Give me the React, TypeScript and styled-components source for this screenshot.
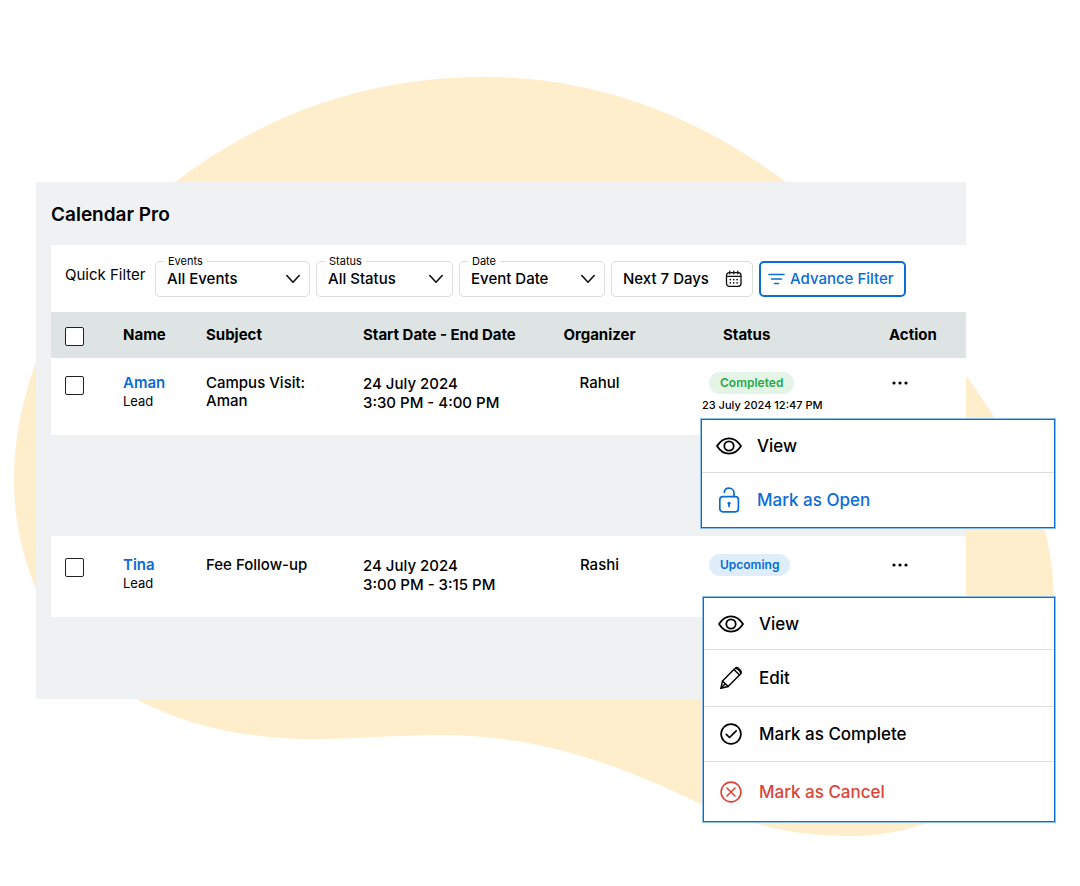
import React from "react";
import styled, { createGlobalStyle } from "styled-components";

const BLUE = "#0a6cd8";
const RED = "#dc4436";

const GlobalStyle = createGlobalStyle`
  *, *::before, *::after { box-sizing: border-box; }
  body {
    margin: 0;
    background: #fff;
    color: #000;
    font-family: Inter, "Liberation Sans", sans-serif;
    font-size: 15px;
    font-weight: 500;
    line-height: 18px;
  }
  button, select { font: inherit; color: inherit; }
`;

const Page = styled.div`
  position: relative;
  min-height: 100vh;
  padding: 182px 114px 64px 36px;
  overflow: hidden;
`;

const Backdrop = styled.svg`
  position: absolute;
  top: 0;
  left: 0;
  width: 100%;
  height: auto;
`;

const Panel = styled.main`
  position: relative;
  padding: 0 0 82px 15px;
  background: #f0f1f3;
`;

const Title = styled.h1`
  margin: 0;
  padding: 21px 0 18px;
  font-size: 19px;
  font-weight: 600;
  line-height: 24px;
`;

const FilterBar = styled.form`
  display: flex;
  align-items: flex-start;
  gap: 6px;
  padding: 16px 14px 15px;
  background: #fff;
  font-weight: 400;
`;

const FilterHeading = styled.span`
  flex: none;
  width: 84px;
  padding-top: 5px;
  white-space: nowrap;
`;

const Field = styled.div<{ $width: number }>`
  position: relative;
  flex: 0 1 ${(p) => p.$width}px;
  min-width: 0;

  > svg {
    position: absolute;
    top: 13px;
    right: 9px;
    pointer-events: none;
  }
`;

const FieldLabel = styled.label`
  position: absolute;
  top: -6px;
  left: 9px;
  padding: 0 4px;
  background: #fff;
  font-size: 11px;
  line-height: 12px;
`;

const Select = styled.select`
  display: block;
  width: 100%;
  height: 36px;
  padding: 0 28px 0 11px;
  border: 1px solid #dcdcdc;
  border-radius: 5px;
  background: #fff;
  font-weight: 500;
  appearance: none;
`;

const DateButton = styled.button`
  display: flex;
  flex: 0 1 142px;
  align-items: center;
  justify-content: space-between;
  height: 36px;
  padding: 0 10px 0 11px;
  border: 1px solid #dcdcdc;
  border-radius: 5px;
  background: #fff;
  font-weight: 500;
  white-space: nowrap;
`;

const AdvanceButton = styled.button`
  display: flex;
  flex: 0 1 147px;
  align-items: center;
  gap: 5px;
  height: 36px;
  padding: 0 7px;
  border: 2px solid ${BLUE};
  border-radius: 5px;
  background: #fff;
  color: ${BLUE};
  font-weight: 500;
  white-space: nowrap;
`;

const Table = styled.table`
  width: 100%;
  table-layout: fixed;
  border-collapse: collapse;
  text-align: left;
`;

const HeadRow = styled.tr`
  height: 46px;
  background: #dee4e3;
`;

const HeadCell = styled.th<{ $inset?: number; $center?: boolean }>`
  padding: 0 0 0 ${(p) => p.$inset ?? 0}px;
  font-weight: 700;
  text-align: ${(p) => (p.$center ? "center" : "left")};
  white-space: nowrap;
`;

const BodyRow = styled.tr<{ $height: number; $top: number }>`
  height: ${(p) => p.$height}px;
  background: #fff;

  > td {
    padding-top: ${(p) => p.$top}px;
  }
`;

const SpacerRow = styled.tr`
  height: 101px;
`;

const Cell = styled.td<{ $inset?: number; $center?: boolean }>`
  position: relative;
  padding: 0 0 0 ${(p) => p.$inset ?? 0}px;
  text-align: ${(p) => (p.$center ? "center" : "left")};
  vertical-align: top;
  white-space: nowrap;
`;

const Checkbox = styled.input`
  display: block;
  width: 19px;
  height: 19px;
  margin: 2px 0 0;
  border: 1px solid #222;
  border-radius: 2px;
  background: #fff;
  appearance: none;

  &:checked {
    background: ${BLUE};
  }
`;

const NameLink = styled.a`
  display: block;
  color: ${BLUE};
  font-weight: 600;
  text-decoration: none;
`;

const Kind = styled.span`
  display: block;
  font-size: 13px;
  font-weight: 400;
`;

const Subject = styled.span`
  display: block;
  max-width: 110px;
  white-space: normal;
`;

const Times = styled.span`
  display: block;
  line-height: 19px;
`;

const Chip = styled.span<{ $tone: "green" | "blue" }>`
  display: block;
  width: fit-content;
  margin: -2px 0 0 7px;
  padding: 0 11px;
  border-radius: 11px;
  background: ${(p) => (p.$tone === "green" ? "#e4f5e8" : "#dfedfa")};
  color: ${(p) => (p.$tone === "green" ? "#2aa84a" : BLUE)};
  font-size: 12px;
  font-weight: 600;
  line-height: 22px;
`;

const Stamp = styled.time`
  display: block;
  margin-top: 2px;
  font-size: 11px;
`;

const MoreButton = styled.button`
  display: block;
  padding: 0;
  border: 0;
  background: none;
  line-height: 0;
`;

const Menu = styled.ul<{ $width: number }>`
  position: absolute;
  z-index: 1;
  top: 61px;
  right: -89px;
  width: ${(p) => p.$width}px;
  margin: 0;
  padding: 0;
  border: 1px solid ${BLUE};
  background: #fff;
  box-shadow: 0 0 0 1px #8fbfef;
  list-style: none;
`;

const MenuEntry = styled.li`
  & + & {
    border-top: 1px solid #dedede;
  }
`;

const MenuButton = styled.button<{ $height: number; $color?: string }>`
  display: flex;
  align-items: center;
  gap: 15px;
  width: 100%;
  height: ${(p) => p.$height}px;
  padding: 0 14px;
  border: 0;
  background: none;
  color: ${(p) => p.$color ?? "#000"};
  font-size: 17px;
  font-weight: 500;
`;

const Chevron = () => (
  <svg width="16" height="10" viewBox="0 0 16 10" fill="none" stroke="#111" strokeWidth="1.6" strokeLinecap="round" strokeLinejoin="round" aria-hidden="true">
    <path d="M1.800 1.500 8 8.200l6.200-6.700" />
  </svg>
);

const CalendarIcon = () => (
  <svg width="17" height="18" viewBox="0 0 17 18" fill="none" stroke="#111" strokeWidth="1.300" strokeLinecap="round" aria-hidden="true">
    <rect x="1.500" y="2.600" width="14.500" height="13.800" rx="2.800" />
    <path d="M1.500 6.300H16M4.800 1.200v2.600M8.800 1.200v2.600M12.800 1.200v2.600" />
    <path d="M5.300 9.600h.01M8.700 9.600h.01M12.100 9.600h.01M5.300 12.800h.01M8.700 12.800h.01M12.100 12.800h.01" strokeWidth="1.700" />
  </svg>
);

const FilterIcon = () => (
  <svg width="17" height="12" viewBox="0 0 17 12" fill="none" stroke="currentColor" strokeWidth="1.500" strokeLinecap="round" aria-hidden="true">
    <path d="M1 1.500h15M3.500 6h10M6.500 10.500h4" />
  </svg>
);

const DotsIcon = () => (
  <svg width="22" height="18" viewBox="0 0 22 18" aria-hidden="true">
    <circle cx="5" cy="9" r="1.600" />
    <circle cx="11" cy="9" r="1.600" />
    <circle cx="17" cy="9" r="1.600" />
  </svg>
);

const MenuIcon = styled.svg.attrs({
  width: 26,
  height: 26,
  viewBox: "0 0 26 26",
  fill: "none",
  stroke: "currentColor",
  strokeLinecap: "round",
  strokeLinejoin: "round",
  "aria-hidden": true,
})`
  flex: none;
`;

const EyeIcon = () => (
  <MenuIcon strokeWidth={1.8}>
    <path d="M1 13C4.200 8 8.200 5.300 13 5.300S21.800 8 25 13C21.800 18 17.800 20.700 13 20.700S4.200 18 1 13Z" />
    <circle cx="13" cy="13" r="4.700" />
  </MenuIcon>
);

const UnlockIcon = () => (
  <MenuIcon strokeWidth={1.7}>
    <rect x="3.800" y="9.600" width="18.600" height="15.200" rx="3" />
    <path d="M8.300 5.400C8.500 2.800 10.300 1.200 13 1.200s5 2 5 4.600v3.800" />
    <circle cx="13" cy="16.200" r="1.500" fill="currentColor" stroke="none" />
    <path d="M13 16.500v3" />
  </MenuIcon>
);

const PencilIcon = () => (
  <MenuIcon strokeWidth={1.4}>
    <path d="M2.900 23.300 4.500 15.900 15.900 4.500l1.200-1.100c1-1 2.500-.9 3.500.1l1.900 1.900c1 1 1.100 2.500.1 3.500l-1.100 1.200L10.100 21.500Z" />
    <path d="M15.900 4.500l5.600 5.600M17.700 3.200c1.900.4 4.400 2.900 5 4.900M4.500 15.900l5.600 5.600M2.900 23.300 7 19" />
  </MenuIcon>
);

const CheckIcon = () => (
  <MenuIcon strokeWidth={1.7}>
    <circle cx="13" cy="13" r="9.900" />
    <path d="M8.300 13.400l3.200 3.100 6.700-6.700" />
  </MenuIcon>
);

const CancelIcon = () => (
  <MenuIcon strokeWidth={1.6}>
    <circle cx="13" cy="13" r="9.900" />
    <path d="M9 9l8 8M17 9l-8 8" />
  </MenuIcon>
);

type Action = { label: string; icon: React.ReactNode; height: number; color?: string };

const completedActions: Action[] = [
  { label: "View", icon: <EyeIcon />, height: 52 },
  { label: "Mark as Open", icon: <UnlockIcon />, height: 54, color: BLUE },
];

const upcomingActions: Action[] = [
  { label: "View", icon: <EyeIcon />, height: 51 },
  { label: "Edit", icon: <PencilIcon />, height: 56 },
  { label: "Mark as Complete", icon: <CheckIcon />, height: 54 },
  { label: "Mark as Cancel", icon: <CancelIcon />, height: 59, color: RED },
];

const filters = [
  { id: "events", label: "Events", value: "All Events", width: 155 },
  { id: "status", label: "Status", value: "All Status", width: 137 },
  { id: "date", label: "Date", value: "Event Date", width: 146 },
];

const columns = [72, 83, 157, 162, 149, 215, 77];

function ActionMenu({ actions, width }: { actions: Action[]; width: number }) {
  return (
    <Menu $width={width}>
      {actions.map((action) => (
        <MenuEntry key={action.label}>
          <MenuButton type="button" $height={action.height} $color={action.color}>
            {action.icon}
            {action.label}
          </MenuButton>
        </MenuEntry>
      ))}
    </Menu>
  );
}

export default function App() {
  return (
    <>
      <GlobalStyle />
      <Page>
        <Backdrop viewBox="0 0 1080 886" aria-hidden="true">
          <path
            fill="#ffeecb"
            d="M485 77C600 77 700 118 786 182C870 243 930 310 967 377C990 408 1030 470 1045 531C1051 555 1054 575 1054 610C1054 740 980 836 850 836C790 836 750 824 703 805C620 765 540 735 440 735C390 735 350 740 298 739C235 736 185 725 136 699C90 670 60 640 36 589C20 550 14 515 14 478C14 440 22 400 36 362C62 300 110 235 175 182C260 118 360 77 485 77Z"
          />
        </Backdrop>
        <Panel>
          <Title>Calendar Pro</Title>
          <FilterBar>
            <FilterHeading>Quick Filter</FilterHeading>
            {filters.map((filter) => (
              <Field key={filter.id} $width={filter.width}>
                <FieldLabel htmlFor={filter.id}>{filter.label}</FieldLabel>
                <Select id={filter.id}>
                  <option>{filter.value}</option>
                </Select>
                <Chevron />
              </Field>
            ))}
            <DateButton type="button">
              Next 7 Days
              <CalendarIcon />
            </DateButton>
            <AdvanceButton type="button">
              <FilterIcon />
              Advance Filter
            </AdvanceButton>
          </FilterBar>
          <Table>
            <colgroup>
              {columns.map((width, index) => (
                <col key={index} width={width} />
              ))}
            </colgroup>
            <thead>
              <HeadRow>
                <HeadCell $inset={14}>
                  <Checkbox type="checkbox" aria-label="Select all" />
                </HeadCell>
                <HeadCell>Name</HeadCell>
                <HeadCell>Subject</HeadCell>
                <HeadCell>Start Date - End Date</HeadCell>
                <HeadCell $center>Organizer</HeadCell>
                <HeadCell $inset={49}>Status</HeadCell>
                <HeadCell>Action</HeadCell>
              </HeadRow>
            </thead>
            <tbody>
              <BodyRow $height={77} $top={16}>
                <Cell $inset={14}>
                  <Checkbox type="checkbox" aria-label="Select Aman" />
                </Cell>
                <Cell>
                  <NameLink href="#aman">Aman</NameLink>
                  <Kind>Lead</Kind>
                </Cell>
                <Cell>
                  <Subject>Campus Visit: Aman</Subject>
                </Cell>
                <Cell>
                  <Times>24 July 2024</Times>
                  <Times>3:30 PM - 4:00 PM</Times>
                </Cell>
                <Cell $center>Rahul</Cell>
                <Cell $inset={28}>
                  <Chip $tone="green">Completed</Chip>
                  <Stamp>23 July 2024 12:47 PM</Stamp>
                </Cell>
                <Cell>
                  <MoreButton type="button" aria-label="Actions for Aman">
                    <DotsIcon />
                  </MoreButton>
                  <ActionMenu actions={completedActions} width={354} />
                </Cell>
              </BodyRow>
              <SpacerRow aria-hidden="true">
                <td colSpan={columns.length} />
              </SpacerRow>
              <BodyRow $height={81} $top={20}>
                <Cell $inset={14}>
                  <Checkbox type="checkbox" aria-label="Select Tina" />
                </Cell>
                <Cell>
                  <NameLink href="#tina">Tina</NameLink>
                  <Kind>Lead</Kind>
                </Cell>
                <Cell>
                  <Subject>Fee Follow-up</Subject>
                </Cell>
                <Cell>
                  <Times>24 July 2024</Times>
                  <Times>3:00 PM - 3:15 PM</Times>
                </Cell>
                <Cell $center>Rashi</Cell>
                <Cell $inset={28}>
                  <Chip $tone="blue">Upcoming</Chip>
                </Cell>
                <Cell>
                  <MoreButton type="button" aria-label="Actions for Tina">
                    <DotsIcon />
                  </MoreButton>
                  <ActionMenu actions={upcomingActions} width={352} />
                </Cell>
              </BodyRow>
            </tbody>
          </Table>
        </Panel>
      </Page>
    </>
  );
}
